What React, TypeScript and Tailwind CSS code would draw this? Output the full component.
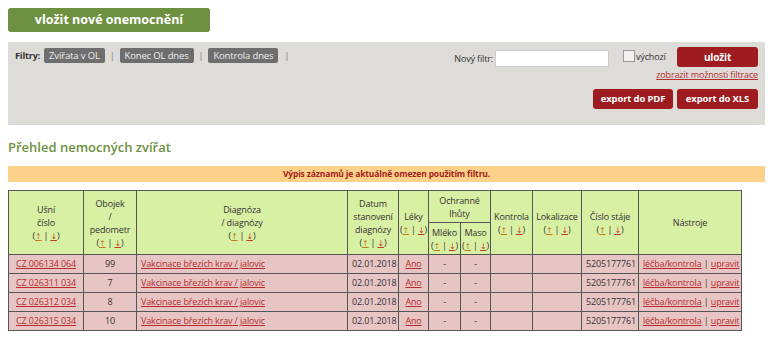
import React from "react";

const rows = [
  { ear: "CZ 006134 064", collar: "99" },
  { ear: "CZ 026311 034", collar: "7" },
  { ear: "CZ 026312 034", collar: "8" },
  { ear: "CZ 026315 034", collar: "10" },
];

function Sort() {
  return (
    <span className="text-[#333] whitespace-nowrap">
      (<span className="text-[#c27a1c] underline text-[8px]">↑</span>
      <span className="mx-[2px]">|</span>
      <span className="text-[#c0392b] underline text-[8px]">↓</span>)
    </span>
  );
}

const th = "border border-[#555] bg-[#d8f0a3] font-normal text-[#333] align-middle text-center leading-[13px] px-0";
const td = "border border-[#555] bg-[#e8c5c5] h-[19px] px-[4px] py-0 text-[#333] leading-[14px] whitespace-nowrap";
const link = "text-[#b72c2c] underline";
const tag = "bg-[#6e6e6e] text-[#eee] rounded-[2px] px-[5px] text-[9.5px] leading-[15px]";

export default function App() {
  return (
    <div
      className="w-[774px] h-[340px] bg-white overflow-hidden text-[9px] tracking-[-0.15px]"
      style={{ fontFamily: '"Open Sans", "DejaVu Sans", sans-serif' }}
    >
      <div className="px-[8px] pt-[8px]">
        <button className="w-[202px] h-[24px] rounded-[3px] bg-[#6d9140] text-white font-bold text-[12.5px] leading-[24px] tracking-normal">
          vložit nové onemocnění
        </button>

        {/* filtry */}
        <div className="mt-[10px] w-[757px] h-[83px] bg-[#dddcd8] flex justify-between pl-[7px] pr-[7px] pt-[5px]">
          <div className="flex items-center gap-[5px] h-[17px]">
            <span className="font-bold text-[#333] mr-[-1px]">Filtry:</span>
            <span className={tag}>Zvířata v OL</span>
            <span className="text-[#777]">|</span>
            <span className={tag}>Konec OL dnes</span>
            <span className="text-[#777]">|</span>
            <span className={tag}>Kontrola dnes</span>
            <span className="text-[#777] ml-[1px]">|</span>
          </div>
          <div className="flex flex-col items-end">
            <div className="flex items-start">
              <span className="text-[#333] mt-[5px] mr-[2px]">Nový filtr:</span>
              <input className="w-[114px] h-[17px] bg-white border border-[#ccc] mt-[3px]" />
              <span className="ml-[14px] mt-[3px] w-[12px] h-[12px] border border-[#999] bg-[#f2f2f2]" />
              <span className="text-[#333] mt-[3px] ml-[1px] w-[38px]">výchozí</span>
              <button className="ml-[3px] w-[81px] h-[20px] rounded-[3px] bg-[#9e1c1f] text-white font-bold text-[10px]">uložit</button>
            </div>
            <a className="text-[#b72c2c] underline leading-[14px] mt-[1px]">zobrazit možnosti filtrace</a>
            <div className="flex gap-[4px] mt-[7px]">
              <button className="w-[80px] h-[20px] rounded-[3px] bg-[#9e1c1f] text-white font-bold text-[9.5px]">export do PDF</button>
              <button className="w-[81px] h-[20px] rounded-[3px] bg-[#9e1c1f] text-white font-bold text-[9.5px]">export do XLS</button>
            </div>
          </div>
        </div>

        <h2 className="mt-[12px] text-[#6d9140] font-semibold text-[13px] leading-[20px] tracking-normal">Přehled nemocných zvířat</h2>

        <div className="mt-[9px] w-[757px] h-[16px] bg-[#fcd28a] text-center text-[#a32020] font-bold text-[8.5px] leading-[16px]">
          Výpis záznamů je aktuálně omezen použitím filtru.
        </div>

        <table className="mt-[8px] border-collapse w-[733px] table-fixed">
          <colgroup>
            <col className="w-[75px]" />
            <col className="w-[53px]" />
            <col className="w-[211px]" />
            <col className="w-[51px]" />
            <col className="w-[30px]" />
            <col className="w-[32px]" />
            <col className="w-[30px]" />
            <col className="w-[42px]" />
            <col className="w-[49px]" />
            <col className="w-[57px]" />
            <col className="w-[103px]" />
          </colgroup>
          <thead>
            <tr className="h-[32px]">
              <th rowSpan={2} className={th}>Ušní<br />číslo<br /><Sort /></th>
              <th rowSpan={2} className={th}>Obojek<br />/<br />pedometr<br /><Sort /></th>
              <th rowSpan={2} className={th}>Diagnóza<br />/ diagnózy<br /><Sort /></th>
              <th rowSpan={2} className={th}>Datum<br />stanovení<br />diagnózy<br /><Sort /></th>
              <th rowSpan={2} className={th}>Léky<br /><Sort /></th>
              <th colSpan={2} className={th}>Ochranné<br />lhůty</th>
              <th rowSpan={2} className={th}>Kontrola<br /><Sort /></th>
              <th rowSpan={2} className={th}>Lokalizace<br /><Sort /></th>
              <th rowSpan={2} className={th}>Číslo stáje<br /><Sort /></th>
              <th rowSpan={2} className={th}>Nástroje</th>
            </tr>
            <tr className="h-[32px]">
              <th className={th}>Mléko<br /><Sort /></th>
              <th className={th}>Maso<br /><Sort /></th>
            </tr>
          </thead>
          <tbody>
            {rows.map((r) => (
              <tr key={r.ear}>
                <td className={`${td} text-center`}><a className={link}>{r.ear}</a></td>
                <td className={`${td} text-center`}>{r.collar}</td>
                <td className={td}><a className={link}>Vakcinace březích krav / jalovic</a></td>
                <td className={`${td} text-center`}>02.01.2018</td>
                <td className={`${td} text-center`}><a className={link}>Ano</a></td>
                <td className={`${td} text-center`}>-</td>
                <td className={`${td} text-center`}>-</td>
                <td className={td}></td>
                <td className={td}></td>
                <td className={`${td} text-center`}>5205177761</td>
                <td className={`${td} px-[3px]`}><a className={link}>léčba/kontrola</a> | <a className={link}>upravit</a></td>
              </tr>
            ))}
          </tbody>
        </table>
      </div>
    </div>
  );
}
